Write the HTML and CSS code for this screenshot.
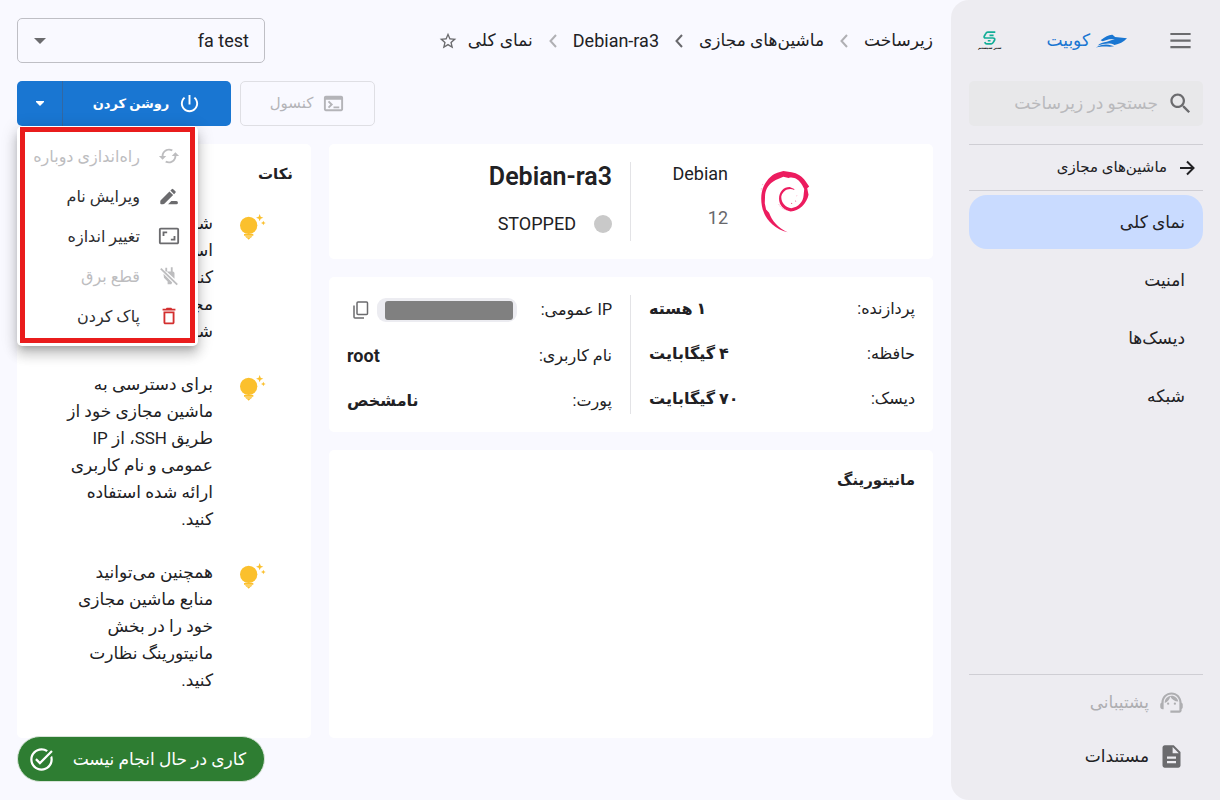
FILE: index.html
```html
<!DOCTYPE html>
<html lang="fa" dir="rtl">
<head>
<meta charset="utf-8">
<title>Debian-ra3 - نمای کلی</title>
<link rel="stylesheet" href="styles.css">
</head>
<body>
<svg class="sprite" aria-hidden="true">
  <symbol id="bulb" viewBox="0 0 78 78">
    <circle cx="26" cy="34" r="26"/>
    <path d="M12 60h28v5H12zM15 67h22l-4 4H19zM21 72h10l-5 5z"/>
    <path d="M59 0l3 8 8 3-8 3-3 8-3-8-8-3 8-3zM70 20l2 5 5 2-5 2-2 5-2-5-5-2 5-2z"/>
  </symbol>
  <symbol id="chevron" viewBox="0 0 8 14"><path d="M7 1 1.500 7 7 13" fill="none" stroke="currentColor" stroke-width="2"/></symbol>
</svg>
<aside class="sidebar">
  <div class="brand">
    <button class="icon-button" aria-label="منو"><svg class="icon" viewBox="0 0 24 24"><path d="M3 5.300h18v1.900H3zM3 11.100h18V13H3zM3 16.900h18v1.900H3z"/></svg></button>
    <a class="logo" href="#">
      <svg class="boat" viewBox="0 0 94 42" aria-hidden="true"><path d="M14 19C28 8 40 1 50 2l8 7 36 4C84 24 70 31 56 33 42 25 24 29 5 35 12 27 22 25 33 23l24-8-17 1-20 6z"/><path d="M0 41c14-9 32-12 47-6l8 2c-17 4-31-3-55 4z"/></svg>
      <span>کوبیت</span>
    </a>
    <a class="partner" href="#">
      <svg viewBox="0 0 44 40" aria-hidden="true"><path d="M39 3H17q-4 0-6 4l-4 7q-3 6 4 6h21q7 0 5 6l-4 7q-2 4-6 4H14q-4 0-6-5M17 28h8M22 12h12" fill="none" stroke="#13ad97" stroke-width="5"/></svg>
      <span>سبز سیستم</span>
    </a>
  </div>
  <label class="search">
    <svg class="icon" viewBox="0 0 24 24" aria-hidden="true"><path d="M15.500 14h-.79l-.28-.27C15.410 12.590 16 11.110 16 9.500 16 5.910 13.090 3 9.500 3S3 5.910 3 9.500 5.910 16 9.500 16c1.610 0 3.090-.59 4.230-1.570l.27.28v.79l5 4.990L20.490 19l-4.990-5zm-6 0C7.010 14 5 11.990 5 9.500S7.010 5 9.500 5 14 7.010 14 9.500 11.990 14 9.500 14z"/></svg>
    <input type="search" placeholder="جستجو در زیرساخت" aria-label="جستجو در زیرساخت">
  </label>
  <a class="back" href="#"><svg viewBox="0 0 16 16" aria-hidden="true"><path d="M1 8h13M8 1.500 14.500 8 8 14.500" fill="none" stroke="currentColor" stroke-width="2"/></svg>ماشین‌های مجازی</a>
  <nav class="nav">
    <a class="nav-item selected" href="#">نمای کلی</a>
    <a class="nav-item" href="#">امنیت</a>
    <a class="nav-item" href="#">دیسک‌ها</a>
    <a class="nav-item" href="#">شبکه</a>
  </nav>
  <div class="help">
    <a class="help-item muted" href="#"><svg class="icon" viewBox="0 0 24 24" aria-hidden="true"><path d="M21 12.220C21 6.730 16.740 3 12 3c-4.690 0-9 3.650-9 9.280-.6.34-1 .98-1 1.720v2c0 1.100.9 2 2 2h1v-6.100c0-3.870 3.130-7 7-7s7 3.130 7 7V19h-8v2h8c1.100 0 2-.9 2-2v-1.220c.59-.31 1-.92 1-1.640v-2.300c0-.7-.41-1.310-1-1.620z"/><circle cx="9" cy="13" r="1"/><circle cx="15" cy="13" r="1"/><path d="M18 11.030C17.520 8.180 15.040 6 12.050 6c-3.030 0-6.290 2.510-6.030 6.450 2.470-1.010 4.330-3.210 4.860-5.890 1.310 2.630 4 4.440 7.120 4.470z"/></svg>پشتیبانی</a>
    <a class="help-item" href="#"><svg class="icon" viewBox="0 0 24 24" aria-hidden="true"><path d="M14 2H6c-1.100 0-1.990.9-1.990 2L4 20c0 1.100.89 2 1.990 2H18c1.100 0 2-.9 2-2V8l-6-6zm2 16H8v-2h8v2zm0-4H8v-2h8v2zm-3-5V3.500L18.500 9H13z"/></svg>مستندات</a>
  </div>
</aside>
<main class="main">
  <header class="topbar">
    <nav class="crumbs">
      <a href="#">زیرساخت</a><svg class="chevron"><use href="#chevron"/></svg>
      <a href="#">ماشین‌های مجازی</a><svg class="chevron strong"><use href="#chevron"/></svg>
      <a class="latin" href="#">Debian-ra3</a><svg class="chevron"><use href="#chevron"/></svg>
      <a href="#">نمای کلی</a>
      <button class="icon-button" aria-label="نشان کردن"><svg class="star" viewBox="0 0 24 24"><path d="M22 9.240l-7.190-.62L12 2 9.190 8.630 2 9.240l5.460 4.730L5.820 21 12 17.270 18.180 21l-1.630-7.030L22 9.240zM12 15.400l-3.760 2.270 1-4.280-3.320-2.880 4.380-.38L12 6.100l1.710 4.040 4.380.38-3.320 2.880 1 4.280L12 15.400z"/></svg></button>
    </nav>
    <div class="project">
      <select aria-label="پروژه"><option>fa test</option></select>
      <svg class="arrow" viewBox="0 0 12 6" aria-hidden="true"><path d="M0 0h12L6 6z"/></svg>
    </div>
  </header>
  <div class="actions">
    <button class="console" disabled><svg class="button-icon" viewBox="0 0 24 24" aria-hidden="true"><path d="M20 4H4c-1.110 0-2 .9-2 2v12c0 1.100.89 2 2 2h16c1.100 0 2-.9 2-2V6c0-1.100-.89-2-2-2zm0 14H4V8h16v10zm-2-1h-6v-2h6v2zM7.500 17l-1.410-1.410L8.670 13l-2.590-2.590L7.500 9l4 4-4 4z"/></svg>کنسول</button>
    <div class="split">
      <button class="power"><svg class="button-icon" viewBox="0 0 24 24" aria-hidden="true"><path d="M13 3h-2v10h2V3zm4.830 2.170l-1.420 1.420C17.990 7.860 19 9.810 19 12c0 3.870-3.130 7-7 7s-7-3.130-7-7c0-2.190 1.010-4.140 2.580-5.420L6.170 5.170C4.230 6.820 3 9.260 3 12c0 4.970 4.030 9 9 9s9-4.030 9-9c0-2.740-1.230-5.180-3.170-6.830z"/></svg>روشن کردن</button>
      <button class="more" aria-label="عملیات بیشتر" aria-expanded="true"><svg viewBox="0 0 8 5" aria-hidden="true"><path d="M0 0h8v1L4 5 0 1z"/></svg></button>
      <div class="menu" role="menu">
        <button role="menuitem" disabled><svg viewBox="0 0 24 24" aria-hidden="true"><path d="m19 8-4 4h3c0 3.310-2.690 6-6 6-1.010 0-1.970-.25-2.800-.7l-1.460 1.460C8.970 19.540 10.430 20 12 20c4.420 0 8-3.580 8-8h3l-4-4zM6 12c0-3.310 2.690-6 6-6 1.010 0 1.970.25 2.800.7l1.460-1.460C15.030 4.460 13.570 4 12 4c-4.420 0-8 3.580-8 8H1l4 4 4-4H6z"/></svg>راه‌اندازی دوباره</button>
        <button role="menuitem"><svg viewBox="0 0 24 24" aria-hidden="true"><path d="m14.500 17.500-3.500 3.500h9a1.750 1.750 0 0 0 0-3.500zM12.500 7 3 16.500Q2.500 17 2.500 18v2q0 1 1 1h2q1 0 1.500-.5l9.500-9.500zM17.500 10l1.500-1.500q.8-.8 0-1.600l-2.400-2.400q-.8-.8-1.600 0L13.500 6z"/></svg>ویرایش نام</button>
        <button role="menuitem"><svg viewBox="0 0 24 24" aria-hidden="true"><path d="M19 12h-2v3h-3v2h5v-5zM7 9h3V7H5v5h2V9zm14-6H3c-1.100 0-2 .9-2 2v14c0 1.100.9 2 2 2h18c1.100 0 2-.9 2-2V5c0-1.100-.9-2-2-2zm0 16.010H3V4.990h18v14.020z"/></svg>تغییر اندازه</button>
        <button role="menuitem" disabled><svg viewBox="0 0 24 24" aria-hidden="true"><path d="M8 3h2v4H8zM14 2.500h2V7h-2zM9.500 7H16q2 0 2 2v6zM6 9.500 15.500 19l-1 2h-4v-3L6.500 14z"/><path d="M3 4l18 17.500" stroke="currentColor" stroke-width="2"/></svg>قطع برق</button>
        <button role="menuitem" class="danger"><svg viewBox="0 0 24 24" aria-hidden="true"><path d="M6 19c0 1.100.9 2 2 2h8c1.100 0 2-.9 2-2V7H6v12zM8 9h8v10H8V9zm7.500-5l-1-1h-5l-1 1H5v2h14V4h-3.500z"/></svg>پاک کردن</button>
      </div>
    </div>
  </div>
  <div class="content">
    <div class="column">
      <section class="card summary">
        <div class="system">
          <svg class="swirl" viewBox="420 103 150 190" aria-hidden="true"><path d="M503 291C467 285 440 253 433 236 424 216 421 190 425 170 430 145 446 125 463 115L472 111 490 106 515 110C531 112 548 123 557 137L568 153 562 158 566 178C561 205 536 228 512 228 491 225 477 209 477 190 477 168 491 154 509 154L523 160 523 163C505 156 489 165 484 182 482 200 496 217 514 218 535 216 550 198 551 180L553 160 547 149C537 130 519 122 506 127L490 123 467 133C446 145 437 159 435 178L434 203 438 222 447 232C455 255 474 278 503 291ZM513 202l5 2-5 1zM527 194l2 3-3 2zM530 180l2 1-1 2z"/><path d="M476 206q9 17 29 18M428 145l-2 6M424 158l-1 8" fill="none" stroke="#ec1c5f" stroke-dasharray="4 3"/></svg>
          <div class="version"><span>Debian</span><span class="number">12</span></div>
        </div>
        <div class="state"><h1>Debian-ra3</h1><p><i class="dot"></i>STOPPED</p></div>
      </section>
      <section class="card details">
        <dl>
          <div><dt>پردازنده:</dt><dd>۱ هسته</dd></div>
          <div><dt>حافظه:</dt><dd>۴ گیگابایت</dd></div>
          <div><dt>دیسک:</dt><dd>۷۰ گیگابایت</dd></div>
        </dl>
        <dl class="access">
          <div><dt>IP عمومی:</dt><dd class="address"><span class="chip"><span class="mask"></span></span><button class="icon-button" aria-label="کپی"><svg class="copy" viewBox="0 0 16 18"><path d="M5 1h8.500q1 0 1 1v10.500q0 1-1 1H5q-1 0-1-1V2q0-1 1-1zM1 4.500V16q0 1 1 1h9" fill="none" stroke="currentColor" stroke-width="1.500"/></svg></button></dd></div>
          <div><dt>نام کاربری:</dt><dd class="latin">root</dd></div>
          <div><dt>پورت:</dt><dd>نامشخص</dd></div>
        </dl>
      </section>
      <section class="card monitoring"><h2>مانیتورینگ</h2></section>
    </div>
    <section class="card tips">
      <h2>نکات</h2>
      <div class="tip"><svg class="bulb"><use href="#bulb"/></svg><p>شما می‌توانید با استفاده از گزینه‌ی کنسول به این ماشین مجازی خود متصل شوید.</p></div>
      <div class="tip"><svg class="bulb"><use href="#bulb"/></svg><p>برای دسترسی به ماشین مجازی خود از طریق SSH، از IP عمومی و نام کاربری ارائه شده استفاده کنید.</p></div>
      <div class="tip"><svg class="bulb"><use href="#bulb"/></svg><p>همچنین می‌توانید منابع ماشین مجازی خود را در بخش مانیتورینگ نظارت کنید.</p></div>
    </section>
  </div>
</main>
<div class="toast" role="status"><span>کاری در حال انجام نیست</span><svg class="icon" viewBox="0 0 24 24" aria-hidden="true"><path d="M22 5.180 10.590 16.600l-4.240-4.240 1.410-1.410 2.830 2.830 10-10L22 5.180zm-2.210 5.040c.13.57.21 1.170.21 1.780 0 4.420-3.580 8-8 8s-8-3.580-8-8 3.580-8 8-8c1.580 0 3.040.46 4.280 1.250l1.440-1.440C16.100 2.670 14.130 2 12 2 6.480 2 2 6.480 2 12s4.480 10 10 10 10-4.480 10-10c0-1.190-.22-2.330-.6-3.390l-1.610 1.610z"/></svg></div>
</body>
</html>
```
FILE: styles.css
```css
* { box-sizing: border-box; }
body {
  margin: 0;
  min-height: 100vh;
  display: flex;
  background: #f9f9ff;
  color: #212124;
  font-family: Roboto, "DejaVu Sans", sans-serif;
  font-size: 17px;
  line-height: 27px;
}
a { color: inherit; text-decoration: none; }
button, input, select { font: inherit; color: inherit; }
button { border: 0; background: none; padding: 0; display: flex; align-items: center; }
svg { fill: currentColor; flex: none; }
h1, h2, p, dl, dd { margin: 0; }
.sprite { position: absolute; width: 0; height: 0; }
.icon { width: 27px; height: 27px; color: #6b6b6e; }
.icon-button { color: #6b6b6e; }

.sidebar {
  flex: none;
  width: 269px;
  padding: 18px 17px 17px 18px;
  display: flex;
  flex-direction: column;
  background: #edecf1;
  border-radius: 18px 0 0 18px;
}
.brand { height: 45px; display: flex; align-items: center; padding: 0 9px; }
.logo { display: flex; align-items: center; gap: 6px; margin-inline-start: 40px; color: #1976d2; font-weight: 500; }
.boat { width: 31px; height: 14px; }
.partner { margin-inline-start: auto; display: flex; flex-direction: column; align-items: center; font-size: 4px; line-height: 6px; font-weight: 700; }
.partner svg { width: 15px; height: 14px; }
.search { margin-top: 18px; height: 45px; display: flex; align-items: center; gap: 9px; padding: 0 9px; border-radius: 5px; background: #e8e8ea; }
.search input { flex: 1; min-width: 0; border: 0; padding: 0; background: none; outline: 0; }
.search input::placeholder { color: #b9b9bc; opacity: 1; }
.back { margin-top: 18px; height: 47px; display: flex; align-items: center; gap: 12px; padding: 0 8px; border: solid #cfced4; border-width: 1px 0; font-size: 15px; }
.back svg { width: 16px; height: 16px; }
.nav { margin-top: 4px; display: flex; flex-direction: column; gap: 4px; }
.nav-item { height: 54px; display: flex; align-items: center; padding: 0 18px; border-radius: 18px; }
.nav-item.selected { background: #c9dbff; }
.help { margin-top: auto; border-top: 1px solid #cfced4; }
.help-item { height: 54px; display: flex; align-items: center; gap: 9px; padding: 0 18px; }
.help-item.muted, .help-item.muted .icon { color: #aeaeb1; }

.main { flex: 1; min-width: 0; padding: 18px 18px 18px 17px; display: flex; flex-direction: column; gap: 18px; }
.topbar { display: flex; justify-content: space-between; align-items: center; }
.crumbs { display: flex; align-items: center; }
.chevron { width: 8px; height: 14px; margin: 0 16px; color: #b0b0b4; }
.chevron.strong { color: #68686c; }
.latin { font-size: 18px; }
.star { width: 20px; height: 20px; margin-inline-start: 10px; }
.project { position: relative; width: 248px; }
.project select { appearance: none; width: 100%; height: 45px; padding: 0 15px; border: 1px solid #bfbfc5; border-radius: 5px; background: none; font-size: 18px; }
.arrow { position: absolute; left: 17px; top: 20px; width: 12px; height: 6px; color: #6b6b6e; pointer-events: none; }
.actions { display: flex; justify-content: flex-end; gap: 9px; }
.actions > button, .split > button { height: 45px; }
.button-icon { width: 23px; height: 23px; }
.console { width: 135px; justify-content: center; gap: 9px; border: 1px solid #dfdfe4; border-radius: 5px; color: #b4b4b8; font-size: 15px; }
.split { position: relative; display: flex; color: #fff; }
.power { width: 169px; justify-content: center; gap: 9px; background: #1976d2; border-radius: 0 5px 5px 0; border-left: 1px solid #3268a3; font-weight: 700; font-size: 13px; }
.more { width: 45px; justify-content: center; background: #1976d2; border-radius: 5px 0 0 5px; }
.more svg { width: 8px; height: 5px; }
.menu { position: absolute; z-index: 2; top: 100%; left: 0; width: 181px; padding: 10px 0; background: #fff; color: #2d2d30; border-radius: 5px; font-size: 16px; box-shadow: 0 5px 6px -3px rgba(0,0,0,.2), 0 9px 12px 1px rgba(0,0,0,.14), 0 3px 16px 2px rgba(0,0,0,.12); }
.menu::after { content: ""; position: absolute; inset: 1px 3px 3px; border: 5px solid #e91c1c; pointer-events: none; }
.menu button { width: 100%; height: 40px; padding: 0 18px; gap: 18px; white-space: nowrap; }
.menu svg { width: 22px; height: 22px; color: #6b6b6e; }
.menu button:disabled, .menu button:disabled svg { color: #bdbdbf; }
.menu .danger svg { color: #d32f2f; }

.content { flex: 1; display: grid; grid-template-columns: minmax(0, 1fr) 294px; gap: 18px; margin-bottom: 44px; }
.column { display: flex; flex-direction: column; gap: 18px; }
.card { background: #fff; border-radius: 5px; padding: 18px; }
.summary, .details { display: grid; grid-template-columns: 1fr 1fr; }
.system { display: flex; align-items: flex-start; padding-inline-start: 105px; gap: 32px; font-size: 18px; }
.swirl { width: 50px; height: 63px; margin-top: 8px; color: #ec1c5f; }
.version { display: flex; flex-direction: column; gap: 20px; text-align: right; height: 79px; line-height: 24px; }
.number { color: #68686c; }
.state { border-right: 1px solid #e3e3e6; padding-right: 18px; display: flex; flex-direction: column; gap: 18px; }
.state h1 { font-size: 25px; line-height: 30px; font-weight: 600; }
.state p { display: flex; align-items: center; gap: 18px; font-size: 18px; }
.dot { width: 18px; height: 18px; border-radius: 50%; background: #c9c9c9; }
.details { font-size: 16px; }
.details dl { display: flex; flex-direction: column; gap: 18px; padding-left: 18px; }
.details dl > div { display: flex; justify-content: space-between; align-items: center; }
.details .access { border-right: 1px solid #e3e3e6; padding: 0 18px 0 0; }
dd { font-weight: 700; }
.address { display: flex; align-items: center; gap: 8px; height: 29px; padding-left: 6px; }
.chip { width: 140px; height: 24px; padding: 3px 4px 2px 8px; border-radius: 9px; background: #ececf1; }
.mask { display: block; height: 19px; border-radius: 3px; background: #808080; }
.copy { width: 16px; height: 18px; }
.monitoring { flex: 1; }
h2 { font-size: 15px; line-height: 25px; }
.tips { padding-bottom: 27px; display: flex; flex-direction: column; gap: 26px; }
.tip { display: flex; align-items: flex-start; gap: 27px; padding: 0 27px; }
.tips h2 { margin-bottom: -3px; }
.bulb { width: 26px; height: 26px; margin-top: 4px; color: #fbc02d; }
.tip p { flex: 1; min-width: 0; }

.toast { position: fixed; left: 17px; bottom: 18px; width: 248px; height: 46px; padding: 0 18px 0 10px; display: flex; align-items: center; justify-content: space-between; border: 1px solid #d7e3d8; border-radius: 23px; background: #2e7d32; color: #fff; font-weight: 500; }
.toast .icon { color: #fff; }
```
